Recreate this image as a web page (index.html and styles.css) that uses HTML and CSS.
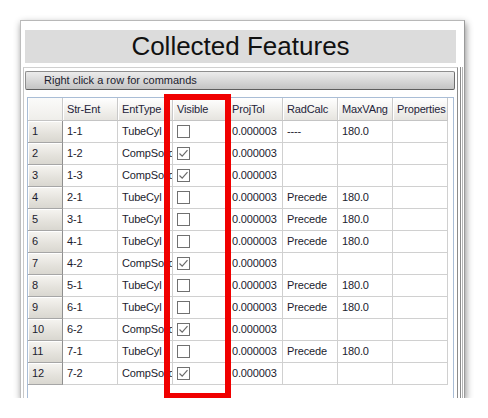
FILE: index.html
```
<!DOCTYPE html>
<html>
<head>
<meta charset="utf-8">
<link rel="stylesheet" href="styles.css">
</head>
<body>
<div class="window">
  <div class="titlebar">Collected Features</div>
  <div class="panel">
    <div class="cmdbar">Right click a row for commands</div>
    <div class="grid-wrap">
      <div class="grid">
        <div class="hc corner"></div>
        <div class="hc">Str-Ent</div>
        <div class="hc">EntType</div>
        <div class="hc">Visible</div>
        <div class="hc">ProjTol</div>
        <div class="hc">RadCalc</div>
        <div class="hc">MaxVAng</div>
        <div class="hc">Properties</div>

        <div class="rh">1</div><div class="c">1-1</div><div class="c">TubeCyl</div><div class="c"><span class="cb"></span></div><div class="c">0.000003</div><div class="c">----</div><div class="c">180.0</div><div class="c"></div>
        <div class="rh">2</div><div class="c">1-2</div><div class="c">CompSolid</div><div class="c"><span class="cb on"><svg viewBox="0 0 13 13" width="13" height="13"><polyline points="2.5,6.5 5.2,9.2 10.5,3.2" fill="none" stroke="#6b6b6b" stroke-width="1.2"/></svg></span></div><div class="c">0.000003</div><div class="c"></div><div class="c"></div><div class="c"></div>
        <div class="rh">3</div><div class="c">1-3</div><div class="c">CompSolid</div><div class="c"><span class="cb on"><svg viewBox="0 0 13 13" width="13" height="13"><polyline points="2.5,6.5 5.2,9.2 10.5,3.2" fill="none" stroke="#6b6b6b" stroke-width="1.2"/></svg></span></div><div class="c">0.000003</div><div class="c"></div><div class="c"></div><div class="c"></div>
        <div class="rh">4</div><div class="c">2-1</div><div class="c">TubeCyl</div><div class="c"><span class="cb"></span></div><div class="c">0.000003</div><div class="c">Precede</div><div class="c">180.0</div><div class="c"></div>
        <div class="rh">5</div><div class="c">3-1</div><div class="c">TubeCyl</div><div class="c"><span class="cb"></span></div><div class="c">0.000003</div><div class="c">Precede</div><div class="c">180.0</div><div class="c"></div>
        <div class="rh">6</div><div class="c">4-1</div><div class="c">TubeCyl</div><div class="c"><span class="cb"></span></div><div class="c">0.000003</div><div class="c">Precede</div><div class="c">180.0</div><div class="c"></div>
        <div class="rh">7</div><div class="c">4-2</div><div class="c">CompSolid</div><div class="c"><span class="cb on"><svg viewBox="0 0 13 13" width="13" height="13"><polyline points="2.5,6.5 5.2,9.2 10.5,3.2" fill="none" stroke="#6b6b6b" stroke-width="1.2"/></svg></span></div><div class="c">0.000003</div><div class="c"></div><div class="c"></div><div class="c"></div>
        <div class="rh">8</div><div class="c">5-1</div><div class="c">TubeCyl</div><div class="c"><span class="cb"></span></div><div class="c">0.000003</div><div class="c">Precede</div><div class="c">180.0</div><div class="c"></div>
        <div class="rh">9</div><div class="c">6-1</div><div class="c">TubeCyl</div><div class="c"><span class="cb"></span></div><div class="c">0.000003</div><div class="c">Precede</div><div class="c">180.0</div><div class="c"></div>
        <div class="rh">10</div><div class="c">6-2</div><div class="c">CompSolid</div><div class="c"><span class="cb on"><svg viewBox="0 0 13 13" width="13" height="13"><polyline points="2.5,6.5 5.2,9.2 10.5,3.2" fill="none" stroke="#6b6b6b" stroke-width="1.2"/></svg></span></div><div class="c">0.000003</div><div class="c"></div><div class="c"></div><div class="c"></div>
        <div class="rh">11</div><div class="c">7-1</div><div class="c">TubeCyl</div><div class="c"><span class="cb"></span></div><div class="c">0.000003</div><div class="c">Precede</div><div class="c">180.0</div><div class="c"></div>
        <div class="rh">12</div><div class="c">7-2</div><div class="c">CompSolid</div><div class="c"><span class="cb on"><svg viewBox="0 0 13 13" width="13" height="13"><polyline points="2.5,6.5 5.2,9.2 10.5,3.2" fill="none" stroke="#6b6b6b" stroke-width="1.2"/></svg></span></div><div class="c">0.000003</div><div class="c"></div><div class="c"></div><div class="c"></div>
      </div>
    </div>
  </div>
  <div class="highlight"></div>
</div>
</body>
</html>
```

FILE: styles.css
```
html, body {
  margin: 0;
  padding: 0;
  background: #ffffff;
}
body {
  padding: 20px 0 0 20px;
  font-family: "Liberation Sans", Arial, sans-serif;
  color: #1c1c2e;
}
.window {
  position: relative;
  box-sizing: border-box;
  width: 445px;
  height: 378px;
  background: #ffffff;
  border-top: 1px solid #b8b8b8;
  border-left: 1px solid #bdbdbd;
  border-right: 1px solid #9a9a9a;
  padding: 9px 0 0 2px;
  box-shadow: 1px 3px 7px rgba(0, 0, 0, 0.45);
  display: flex;
  flex-direction: column;
}
.titlebar {
  box-sizing: border-box;
  margin-left: 2px;
  width: 431px;
  height: 33px;
  background: #dcdcdc;
  font-size: 26px;
  line-height: 33px;
  text-align: center;
  color: #111111;
  flex: none;
}
.panel {
  box-sizing: border-box;
  margin-top: 4px;
  width: 435px;
  flex: 1;
  border-left: 1px solid #c8c8c8;
  border-right: 1px solid #8c8c8c;
  border-top: 1px solid #d0d0d0;
  padding-top: 3px;
  display: flex;
  flex-direction: column;
  box-shadow: 2px 0 0 #ffffff, 3px 0 0 #8a8a8a, 4px 0 0 #ffffff, 5px 0 0 #b4b4b4;
}
.cmdbar {
  box-sizing: border-box;
  margin-left: 1px;
  width: 430px;
  height: 19px;
  flex: none;
  border: 1px solid #8e8e8e;
  border-bottom-color: #5e5e5e;
  border-right-color: #6e6e6e;
  border-radius: 2px;
  background: linear-gradient(#ececec, #d6d6d6 55%, #c4c4c4);
  font-size: 11px;
  line-height: 17px;
  padding-left: 18px;
  color: #1c1c2e;
}
.grid-wrap {
  box-sizing: border-box;
  margin: 7px 0 0 3px;
  width: 427px;
  flex: 1;
  border: 1px solid #a9bdd6;
  border-bottom: none;
  background: #ffffff;
}
.grid {
  display: grid;
  grid-template-columns: 35px repeat(7, 55px);
  grid-auto-rows: 22px;
  grid-template-rows: 23px;
  font-size: 11px;
}
.hc, .rh, .c {
  box-sizing: border-box;
  overflow: hidden;
  white-space: nowrap;
  line-height: 21px;
  padding-left: 4px;
  letter-spacing: -0.15px;
}
.hc {
  background: linear-gradient(#ffffff, #f3f2ef 50%, #e6e4df);
  border-right: 1px solid #c9c9c9;
  border-bottom: 1px solid #c4c4c4;
  box-shadow: inset 1px 0 0 #ffffff;
  line-height: 22px;
  color: #24243a;
}
.hc.corner {
  background: linear-gradient(#fbfbfa, #efeeea);
}
.rh {
  background: linear-gradient(#f6f5f1, #e4e2dc 60%, #d9d7d0);
  border-right: 1px solid #8f8f8f;
  border-bottom: 1px solid #a6a6a6;
  box-shadow: inset 1px 1px 0 #ffffff;
  color: #1c1c2e;
}
.c {
  border-right: 1px solid #d0d0d0;
  border-bottom: 1px solid #d0d0d0;
  color: #1c1c2e;
}
.cb {
  display: inline-block;
  box-sizing: border-box;
  width: 13px;
  height: 13px;
  margin-top: 4px;
  border: 1px solid #707070;
  background: #ffffff;
  vertical-align: top;
  position: relative;
}
.cb svg {
  position: absolute;
  left: -1px;
  top: -1px;
}
.highlight {
  position: absolute;
  left: 143px;
  top: 73px;
  width: 67px;
  height: 305px;
  box-sizing: border-box;
  border: 6px solid #f00000;
}
```
